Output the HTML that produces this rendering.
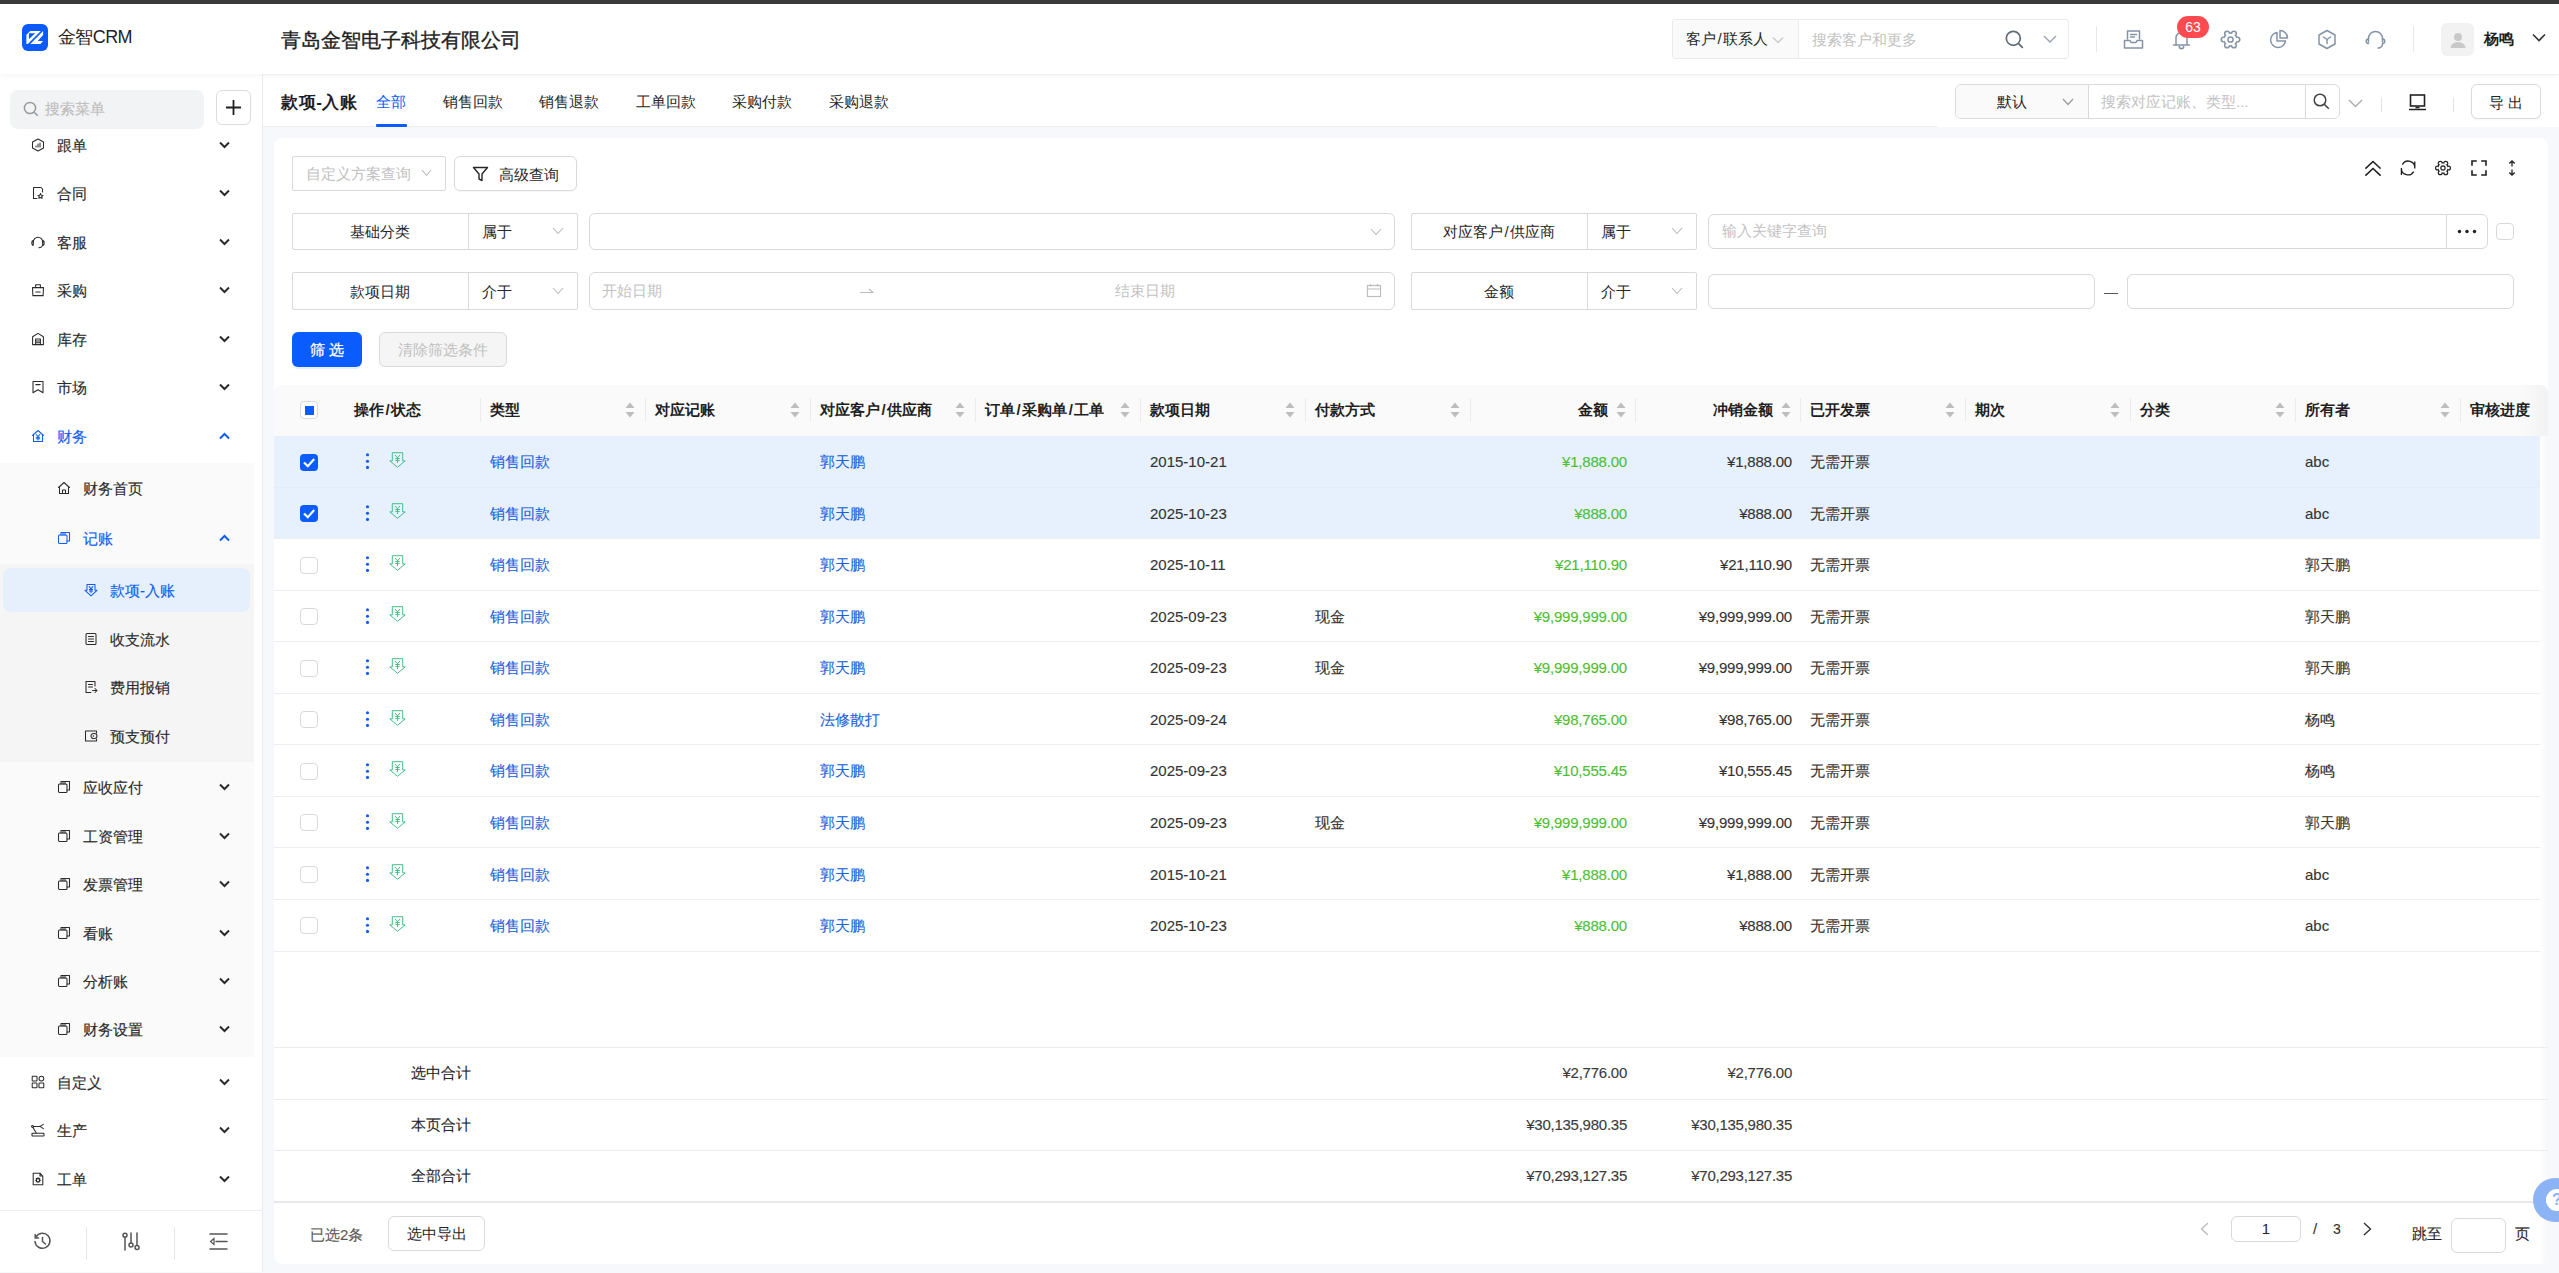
<!DOCTYPE html>
<html><head><meta charset="utf-8">
<style>
*{box-sizing:border-box;margin:0;padding:0}
html,body{width:2559px;height:1273px;overflow:hidden}
body{position:relative;background:#f6f8fb;font-family:"Liberation Sans",sans-serif;font-size:15px;color:#262626}
.a{position:absolute}
svg{display:block;overflow:visible}
#topbar{left:0;top:0;width:2559px;height:4px;background:#3a3a3a}
#header{left:0;top:4px;width:2559px;height:70px;background:#fff;box-shadow:0 2px 5px rgba(0,0,0,.045)}
#sidebar{left:0;top:74px;width:263px;height:1198px;background:#fff;border-right:1px solid #e9ebef}
.si{position:absolute;height:24px;line-height:24px;font-size:15px;color:#262626;white-space:nowrap;-webkit-text-stroke:0.15px currentColor}
.chev{position:absolute;left:219px;width:11px;height:8px}
#tabbar{left:263px;top:75px;width:2296px;height:52px;background:#fff}
#card{left:274px;top:138px;width:2274px;height:1126px;background:#fff;border-radius:8px}
.sl{padding:0 1.5px}

</style></head>
<body>
<div id="topbar" class="a"></div>
<div id="sidebar" class="a"></div>
<div id="tabbar" class="a"></div>
<div id="card" class="a"></div>
<div id="header" class="a"></div>
<div class="a" style="left:22px;top:24px;width:26px;height:27px;border-radius:6px;background:#0a5bff"></div>
<svg class="a" style="left:22px;top:24px" width="26" height="27" viewBox="0 0 26 27"><path d="M4.4 10.7 L8.3 6.9 H18.8 L5.8 19.9 H4.4 Z M6.9 9.2 V15.3 L13.2 9.2 Z" fill="#fff" fill-rule="evenodd"/><path d="M8.3 19.9 L21.1 7.1 V11.1 L15.7 17.1 H21.1 L18.5 19.9 Z" fill="#fff"/></svg>
<div class="a" style="left:58px;top:26px;font-size:18px;line-height:22px;color:#1f1f1f;letter-spacing:-0.6px">金智CRM</div>
<div class="a" style="left:281px;top:28px;font-size:19.6px;line-height:24px;color:#1f1f1f;-webkit-text-stroke:0.35px #1f1f1f">青岛金智电子科技有限公司</div>
<div class="a" style="left:1672px;top:19px;width:397px;height:40px;border:1px solid #ebebeb;border-radius:3px;background:#fff;overflow:hidden"><div class="a" style="left:0;top:0;width:126px;height:38px;background:#fafafa;border-right:1px solid #ebebeb"></div></div>
<div class="a" style="left:1686px;top:28px;line-height:22px;font-size:15px;color:#262626">客户<span class=sl>/</span>联系人</div>
<svg class="a" style="left:1772px;top:36px" width="12" height="8" viewBox="0 0 12 8"><path d="M1 1.5 L6 6.5 L11 1.5" stroke="#c8c8c8" stroke-width="1.3" fill="none"/></svg>
<div class="a" style="left:1812px;top:29px;line-height:22px;font-size:15px;color:#c2c2c2">搜索客户和更多</div>
<svg class="a" style="left:2005px;top:30px" width="19" height="19" viewBox="0 0 19 19"><circle cx="8.3" cy="8.3" r="7" stroke="#606b78" stroke-width="1.7" fill="none"/><path d="M13.3 13.3 L17.8 17.8" stroke="#606b78" stroke-width="1.8"/></svg>
<svg class="a" style="left:2043px;top:35px" width="14" height="8" viewBox="0 0 14 8"><path d="M1 1 L7 7 L13 1" stroke="#9aa3ad" stroke-width="1.4" fill="none"/></svg>
<div class="a" style="left:2096px;top:26px;width:1px;height:26px;background:#e8e8e8"></div>
<div class="a" style="left:2413px;top:26px;width:1px;height:26px;background:#e8e8e8"></div>
<svg class="a" style="left:2123px;top:29px" width="21" height="21" viewBox="0 0 21 21"><path d="M4.5 10 V2 H16.5 V10" stroke="#8494a6" stroke-width="1.5" fill="none" stroke-linecap="round" stroke-linejoin="round"/><path d="M7.5 5.5 H13.5 M7.5 8 H11.5" stroke="#8494a6" stroke-width="1.5" fill="none" stroke-linecap="round" stroke-linejoin="round"/><path d="M1.5 11.5 H7 L8 13.5 H13 L14 11.5 H19.5 V19 H1.5 Z" stroke="#8494a6" stroke-width="1.5" fill="none" stroke-linecap="round" stroke-linejoin="round"/></svg>
<svg class="a" style="left:2171px;top:29px" width="21" height="21" viewBox="0 0 21 21"><path d="M5 16 V9 A5.5 5.5 0 0 1 16 9 V16 M2.5 16 H18.5" stroke="#8494a6" stroke-width="1.5" fill="none" stroke-linecap="round" stroke-linejoin="round"/><path d="M8.3 17.6 A2.2 2.2 0 0 0 12.7 17.6" stroke="#8494a6" stroke-width="1.5" fill="none" stroke-linecap="round" stroke-linejoin="round"/></svg>
<div class="a" style="left:2177px;top:16px;width:32px;height:22px;border-radius:11px;background:#ff4b50;color:#fff;font-size:14px;line-height:23px;text-align:center">63</div>
<svg class="a" style="left:2220px;top:29px" width="21" height="21" viewBox="0 0 21 21"><circle cx="17.40" cy="10.50" r="3.1" fill="#8494a6"/><circle cx="13.95" cy="16.48" r="3.1" fill="#8494a6"/><circle cx="7.05" cy="16.48" r="3.1" fill="#8494a6"/><circle cx="3.60" cy="10.50" r="3.1" fill="#8494a6"/><circle cx="7.05" cy="4.52" r="3.1" fill="#8494a6"/><circle cx="13.95" cy="4.52" r="3.1" fill="#8494a6"/><circle cx="10.5" cy="10.5" r="7.3" fill="#8494a6"/><circle cx="17.20" cy="10.50" r="1.65" fill="#fff"/><circle cx="13.85" cy="16.30" r="1.65" fill="#fff"/><circle cx="7.15" cy="16.30" r="1.65" fill="#fff"/><circle cx="3.80" cy="10.50" r="1.65" fill="#fff"/><circle cx="7.15" cy="4.70" r="1.65" fill="#fff"/><circle cx="13.85" cy="4.70" r="1.65" fill="#fff"/><circle cx="10.5" cy="10.5" r="5.8" fill="#fff"/><circle cx="10.5" cy="10.5" r="2.6" stroke="#8494a6" stroke-width="1.5" fill="none"/></svg>
<svg class="a" style="left:2268px;top:29px" width="21" height="21" viewBox="0 0 21 21"><path d="M9 3.5 A7.5 7.5 0 1 0 17.5 12 H9 Z" stroke="#8494a6" stroke-width="1.5" fill="none" stroke-linecap="round" stroke-linejoin="round"/><path d="M12 1.5 A7.5 7.5 0 0 1 19.5 9 H12 Z" stroke="#8494a6" stroke-width="1.5" fill="none" stroke-linecap="round" stroke-linejoin="round"/></svg>
<svg class="a" style="left:2317px;top:29px" width="20" height="21" viewBox="0 0 20 21"><path d="M10 1.5 L18 6 V15 L10 19.5 L2 15 V6 Z" stroke="#8494a6" stroke-width="1.5" fill="none" stroke-linecap="round" stroke-linejoin="round"/><path d="M6.5 8 L10 10.5 L13.5 8 M10 10.5 V14.5" stroke="#8494a6" stroke-width="1.5" fill="none" stroke-linecap="round" stroke-linejoin="round"/></svg>
<svg class="a" style="left:2365px;top:29px" width="21" height="21" viewBox="0 0 21 21"><path d="M3.5 13 V9.5 A7 7 0 0 1 17.5 9.5 V13" stroke="#8494a6" stroke-width="1.5" fill="none" stroke-linecap="round" stroke-linejoin="round"/><path d="M3.5 10 A2 2 0 0 0 3.5 14.5" stroke="#8494a6" stroke-width="1.5" fill="none" stroke-linecap="round" stroke-linejoin="round"/><path d="M17.5 10 A2 2 0 0 1 17.5 14.5 V15 A4 4 0 0 1 13 19" stroke="#8494a6" stroke-width="1.5" fill="none" stroke-linecap="round" stroke-linejoin="round"/></svg>
<div class="a" style="left:2441px;top:23px;width:33px;height:33px;border-radius:6px;background:#f2f2f2"></div>
<svg class="a" style="left:2448px;top:30px" width="20" height="20" viewBox="0 0 20 20"><circle cx="10" cy="7" r="4" fill="#c9c9c9"/><path d="M2.5 18 Q3 12.5 10 12 Q17 12.5 17.5 18 Z" fill="#c9c9c9"/></svg>
<div class="a" style="left:2484px;top:28px;line-height:22px;font-size:15px;font-weight:bold;color:#1f1f1f">杨鸣</div>
<svg class="a" style="left:2532px;top:33px" width="14" height="9" viewBox="0 0 14 9"><path d="M1 1.5 L7 7.5 L13 1.5" stroke="#333" stroke-width="1.6" fill="none"/></svg>
<div class="a" style="left:0;top:463px;width:254px;height:594px;background:#fafafa"></div>
<div class="a" style="left:0;top:564px;width:254px;height:198px;background:#f5f5f5"></div>
<div class="a" style="left:3px;top:568px;width:247px;height:44px;border-radius:8px;background:#e6f0fc"></div>
<svg class="a" style="left:31px;top:138px" width="14" height="14" viewBox="0 0 14 14"><path d="M7 1 L12.5 4 V10 L7 13 L1.5 10 V4 Z" stroke="#2b2b2b" stroke-width="1.05" fill="none" stroke-linecap="round" stroke-linejoin="round"/><path d="M5 9V8 M7 9V6 M9 9V5" stroke="#2b2b2b" stroke-width="1.05" fill="none" stroke-linecap="round" stroke-linejoin="round"/></svg>
<div class="si" style="left:57px;top:134px;color:#2b2b2b">跟单</div>
<svg class="chev" style="top:141px" viewBox="0 0 11 8"><path d="M1 1.5 L5.5 6 L10 1.5" stroke="#2b2b2b" stroke-width="2" fill="none"/></svg>
<svg class="a" style="left:31px;top:186px" width="14" height="14" viewBox="0 0 14 14"><path d="M10 1.5 H2.5 V12.5 H6 M10 1.5 L11.5 3 V6" stroke="#2b2b2b" stroke-width="1.05" fill="none" stroke-linecap="round" stroke-linejoin="round"/><path d="M9.5 7.5 L10.3 9.2 L12 9.4 L10.8 10.6 L11.1 12.3 L9.5 11.5 L7.9 12.3 L8.2 10.6 L7 9.4 L8.7 9.2Z" stroke="#2b2b2b" stroke-width="1.05" fill="none" stroke-linecap="round" stroke-linejoin="round"/></svg>
<div class="si" style="left:57px;top:182px;color:#2b2b2b">合同</div>
<svg class="chev" style="top:189px" viewBox="0 0 11 8"><path d="M1 1.5 L5.5 6 L10 1.5" stroke="#2b2b2b" stroke-width="2" fill="none"/></svg>
<svg class="a" style="left:31px;top:235px" width="14" height="14" viewBox="0 0 14 14"><path d="M2.3 7.2 A4.7 5 0 0 1 11.7 7.2" stroke="#2b2b2b" stroke-width="1.05" fill="none" stroke-linecap="round" stroke-linejoin="round"/><path d="M2.3 5.6 A1.5 2.3 0 0 0 2.3 10.2 Z" stroke="#2b2b2b" stroke-width="1.05" fill="none" stroke-linecap="round" stroke-linejoin="round"/><path d="M11.7 5.6 A1.5 2.3 0 0 1 11.7 10.2 Z" stroke="#2b2b2b" stroke-width="1.05" fill="none" stroke-linecap="round" stroke-linejoin="round"/><path d="M11.7 10 Q11.2 12.5 7.8 12.8" stroke="#2b2b2b" stroke-width="1.05" fill="none" stroke-linecap="round" stroke-linejoin="round"/></svg>
<div class="si" style="left:57px;top:231px;color:#2b2b2b">客服</div>
<svg class="chev" style="top:238px" viewBox="0 0 11 8"><path d="M1 1.5 L5.5 6 L10 1.5" stroke="#2b2b2b" stroke-width="2" fill="none"/></svg>
<svg class="a" style="left:31px;top:283px" width="14" height="14" viewBox="0 0 14 14"><path d="M1.5 4.6 H12.5 L12.1 12.6 H1.9 Z" stroke="#2b2b2b" stroke-width="1.05" fill="none" stroke-linecap="round" stroke-linejoin="round"/><path d="M4.6 4.6 V1.8 H9.4 V4.6 M4.8 9 H9.2" stroke="#2b2b2b" stroke-width="1.05" fill="none" stroke-linecap="round" stroke-linejoin="round"/></svg>
<div class="si" style="left:57px;top:279px;color:#2b2b2b">采购</div>
<svg class="chev" style="top:286px" viewBox="0 0 11 8"><path d="M1 1.5 L5.5 6 L10 1.5" stroke="#2b2b2b" stroke-width="2" fill="none"/></svg>
<svg class="a" style="left:31px;top:332px" width="14" height="14" viewBox="0 0 14 14"><path d="M1.6 4.8 L7 1.4 L12.4 4.8 V12.6 H1.6 Z" stroke="#2b2b2b" stroke-width="1.05" fill="none" stroke-linecap="round" stroke-linejoin="round"/><path d="M4.6 12.6 V7 H9.4 V12.6 M4.6 8.9 H9.4 M4.6 10.8 H9.4" stroke="#2b2b2b" stroke-width="1.05" fill="none" stroke-linecap="round" stroke-linejoin="round"/></svg>
<div class="si" style="left:57px;top:328px;color:#2b2b2b">库存</div>
<svg class="chev" style="top:335px" viewBox="0 0 11 8"><path d="M1 1.5 L5.5 6 L10 1.5" stroke="#2b2b2b" stroke-width="2" fill="none"/></svg>
<svg class="a" style="left:31px;top:380px" width="14" height="14" viewBox="0 0 14 14"><path d="M2 1.4 H12 V12.8 L7 9.8 L2 12.8 Z" stroke="#2b2b2b" stroke-width="1.05" fill="none" stroke-linecap="round" stroke-linejoin="round"/><path d="M4.8 4.6 H9.2" stroke="#2b2b2b" stroke-width="1.05" fill="none" stroke-linecap="round" stroke-linejoin="round"/></svg>
<div class="si" style="left:57px;top:376px;color:#2b2b2b">市场</div>
<svg class="chev" style="top:383px" viewBox="0 0 11 8"><path d="M1 1.5 L5.5 6 L10 1.5" stroke="#2b2b2b" stroke-width="2" fill="none"/></svg>
<svg class="a" style="left:31px;top:429px" width="14" height="14" viewBox="0 0 14 14"><path d="M1.5 6.5 L7 1.5 L12.5 6.5 M2.5 5.5 V12.5 H11.5 V5.5" stroke="#0e5ef6" stroke-width="1.05" fill="none" stroke-linecap="round" stroke-linejoin="round"/><path d="M5.2 5.5 L7 7.5 L8.8 5.5 M7 7.5 V11 M5.3 8.3 H8.7 M5.3 9.8 H8.7" stroke="#0e5ef6" stroke-width="1.05" fill="none" stroke-linecap="round" stroke-linejoin="round"/></svg>
<div class="si" style="left:57px;top:425px;color:#0e5ef6">财务</div>
<svg class="chev" style="top:432px" viewBox="0 0 11 8"><path d="M1 6.5 L5.5 2 L10 6.5" stroke="#0e5ef6" stroke-width="2" fill="none"/></svg>
<svg class="a" style="left:57px;top:481px" width="14" height="14" viewBox="0 0 14 14"><path d="M1.5 6.5 L7 1.5 L12.5 6.5 M2.5 5.5 V12.5 H11.5 V5.5 M5.5 12.5 V9 H8.5 V12.5" stroke="#2b2b2b" stroke-width="1.05" fill="none" stroke-linecap="round" stroke-linejoin="round"/></svg>
<div class="si" style="left:83px;top:477px;color:#2b2b2b">财务首页</div>
<svg class="a" style="left:57px;top:531px" width="14" height="14" viewBox="0 0 14 14"><rect x="1.5" y="4" width="8.5" height="8.5" rx="1" stroke="#0e5ef6" stroke-width="1.05" fill="none" stroke-linecap="round" stroke-linejoin="round"/><path d="M4 4 V1.5 H12.5 V10 H10 M6 1.5 V4 M8 1.5 V4" stroke="#0e5ef6" stroke-width="1.05" fill="none" stroke-linecap="round" stroke-linejoin="round"/></svg>
<div class="si" style="left:83px;top:527px;color:#0e5ef6">记账</div>
<svg class="chev" style="top:534px" viewBox="0 0 11 8"><path d="M1 6.5 L5.5 2 L10 6.5" stroke="#0e5ef6" stroke-width="2" fill="none"/></svg>
<svg class="a" style="left:84px;top:583px" width="14" height="14" viewBox="0 0 14 14"><path d="M3 1.5 H11 V7.3 H13 L7 12.8 L1 7.3 H3 Z" stroke="#0e5ef6" stroke-width="1.05" fill="none" stroke-linecap="round" stroke-linejoin="round"/><path d="M5.2 3.6 L7 5.8 L8.8 3.6 M7 5.8 V9.6 M5.4 6.5 H8.6 M5.4 8 H8.6" stroke="#0e5ef6" stroke-width="1.05" fill="none" stroke-linecap="round" stroke-linejoin="round"/></svg>
<div class="si" style="left:110px;top:579px;color:#0e5ef6">款项-入账</div>
<svg class="a" style="left:84px;top:632px" width="14" height="14" viewBox="0 0 14 14"><rect x="2" y="1.5" width="10" height="11" rx="1" stroke="#2b2b2b" stroke-width="1.05" fill="none" stroke-linecap="round" stroke-linejoin="round"/><path d="M4.5 4.5 H9.5 M4.5 7 H9.5 M4.5 9.5 H9.5" stroke="#2b2b2b" stroke-width="1.05" fill="none" stroke-linecap="round" stroke-linejoin="round"/></svg>
<div class="si" style="left:110px;top:628px;color:#2b2b2b">收支流水</div>
<svg class="a" style="left:84px;top:680px" width="14" height="14" viewBox="0 0 14 14"><path d="M11 6 V1.5 H2 V12.5 H7 M4.5 4.5H8.5 M4.5 7H8.5 M8.5 10.5 H13 M11 8.5 L13 10.5 L11 12.5" stroke="#2b2b2b" stroke-width="1.05" fill="none" stroke-linecap="round" stroke-linejoin="round"/></svg>
<div class="si" style="left:110px;top:676px;color:#2b2b2b">费用报销</div>
<svg class="a" style="left:84px;top:729px" width="14" height="14" viewBox="0 0 14 14"><path d="M12.5 4 V2 H1.5 V12 H12.5 V10" stroke="#2b2b2b" stroke-width="1.05" fill="none" stroke-linecap="round" stroke-linejoin="round"/><rect x="7" y="4.5" width="6" height="5" rx="2.5" stroke="#2b2b2b" stroke-width="1.05" fill="none" stroke-linecap="round" stroke-linejoin="round"/><circle cx="9.5" cy="7" r="0.8" fill="#2b2b2b"/></svg>
<div class="si" style="left:110px;top:725px;color:#2b2b2b">预支预付</div>
<svg class="a" style="left:57px;top:780px" width="14" height="14" viewBox="0 0 14 14"><rect x="1.5" y="4" width="8.5" height="8.5" rx="1" stroke="#2b2b2b" stroke-width="1.05" fill="none" stroke-linecap="round" stroke-linejoin="round"/><path d="M4 4 V1.5 H12.5 V10 H10 M6 1.5 V4 M8 1.5 V4" stroke="#2b2b2b" stroke-width="1.05" fill="none" stroke-linecap="round" stroke-linejoin="round"/></svg>
<div class="si" style="left:83px;top:776px;color:#2b2b2b">应收应付</div>
<svg class="chev" style="top:783px" viewBox="0 0 11 8"><path d="M1 1.5 L5.5 6 L10 1.5" stroke="#2b2b2b" stroke-width="2" fill="none"/></svg>
<svg class="a" style="left:57px;top:829px" width="14" height="14" viewBox="0 0 14 14"><rect x="1.5" y="4" width="8.5" height="8.5" rx="1" stroke="#2b2b2b" stroke-width="1.05" fill="none" stroke-linecap="round" stroke-linejoin="round"/><path d="M4 4 V1.5 H12.5 V10 H10 M6 1.5 V4 M8 1.5 V4" stroke="#2b2b2b" stroke-width="1.05" fill="none" stroke-linecap="round" stroke-linejoin="round"/></svg>
<div class="si" style="left:83px;top:825px;color:#2b2b2b">工资管理</div>
<svg class="chev" style="top:832px" viewBox="0 0 11 8"><path d="M1 1.5 L5.5 6 L10 1.5" stroke="#2b2b2b" stroke-width="2" fill="none"/></svg>
<svg class="a" style="left:57px;top:877px" width="14" height="14" viewBox="0 0 14 14"><rect x="1.5" y="4" width="8.5" height="8.5" rx="1" stroke="#2b2b2b" stroke-width="1.05" fill="none" stroke-linecap="round" stroke-linejoin="round"/><path d="M4 4 V1.5 H12.5 V10 H10 M6 1.5 V4 M8 1.5 V4" stroke="#2b2b2b" stroke-width="1.05" fill="none" stroke-linecap="round" stroke-linejoin="round"/></svg>
<div class="si" style="left:83px;top:873px;color:#2b2b2b">发票管理</div>
<svg class="chev" style="top:880px" viewBox="0 0 11 8"><path d="M1 1.5 L5.5 6 L10 1.5" stroke="#2b2b2b" stroke-width="2" fill="none"/></svg>
<svg class="a" style="left:57px;top:926px" width="14" height="14" viewBox="0 0 14 14"><rect x="1.5" y="4" width="8.5" height="8.5" rx="1" stroke="#2b2b2b" stroke-width="1.05" fill="none" stroke-linecap="round" stroke-linejoin="round"/><path d="M4 4 V1.5 H12.5 V10 H10 M6 1.5 V4 M8 1.5 V4" stroke="#2b2b2b" stroke-width="1.05" fill="none" stroke-linecap="round" stroke-linejoin="round"/></svg>
<div class="si" style="left:83px;top:922px;color:#2b2b2b">看账</div>
<svg class="chev" style="top:929px" viewBox="0 0 11 8"><path d="M1 1.5 L5.5 6 L10 1.5" stroke="#2b2b2b" stroke-width="2" fill="none"/></svg>
<svg class="a" style="left:57px;top:974px" width="14" height="14" viewBox="0 0 14 14"><rect x="1.5" y="4" width="8.5" height="8.5" rx="1" stroke="#2b2b2b" stroke-width="1.05" fill="none" stroke-linecap="round" stroke-linejoin="round"/><path d="M4 4 V1.5 H12.5 V10 H10 M6 1.5 V4 M8 1.5 V4" stroke="#2b2b2b" stroke-width="1.05" fill="none" stroke-linecap="round" stroke-linejoin="round"/></svg>
<div class="si" style="left:83px;top:970px;color:#2b2b2b">分析账</div>
<svg class="chev" style="top:977px" viewBox="0 0 11 8"><path d="M1 1.5 L5.5 6 L10 1.5" stroke="#2b2b2b" stroke-width="2" fill="none"/></svg>
<svg class="a" style="left:57px;top:1022px" width="14" height="14" viewBox="0 0 14 14"><rect x="1.5" y="4" width="8.5" height="8.5" rx="1" stroke="#2b2b2b" stroke-width="1.05" fill="none" stroke-linecap="round" stroke-linejoin="round"/><path d="M4 4 V1.5 H12.5 V10 H10 M6 1.5 V4 M8 1.5 V4" stroke="#2b2b2b" stroke-width="1.05" fill="none" stroke-linecap="round" stroke-linejoin="round"/></svg>
<div class="si" style="left:83px;top:1018px;color:#2b2b2b">财务设置</div>
<svg class="chev" style="top:1025px" viewBox="0 0 11 8"><path d="M1 1.5 L5.5 6 L10 1.5" stroke="#2b2b2b" stroke-width="2" fill="none"/></svg>
<svg class="a" style="left:31px;top:1075px" width="14" height="14" viewBox="0 0 14 14"><rect x="1.2" y="1.2" width="4.8" height="4.8" rx="0.6" stroke="#2b2b2b" stroke-width="1.05" fill="none" stroke-linecap="round" stroke-linejoin="round"/><circle cx="10.4" cy="3.6" r="2.4" stroke="#2b2b2b" stroke-width="1.05" fill="none" stroke-linecap="round" stroke-linejoin="round"/><rect x="1.2" y="8" width="4.8" height="4.8" rx="0.6" stroke="#2b2b2b" stroke-width="1.05" fill="none" stroke-linecap="round" stroke-linejoin="round"/><rect x="8" y="8" width="4.8" height="4.8" rx="0.6" stroke="#2b2b2b" stroke-width="1.05" fill="none" stroke-linecap="round" stroke-linejoin="round"/></svg>
<div class="si" style="left:57px;top:1071px;color:#2b2b2b">自定义</div>
<svg class="chev" style="top:1078px" viewBox="0 0 11 8"><path d="M1 1.5 L5.5 6 L10 1.5" stroke="#2b2b2b" stroke-width="2" fill="none"/></svg>
<svg class="a" style="left:31px;top:1123px" width="14" height="14" viewBox="0 0 14 14"><circle cx="1.6" cy="3.4" r="1" stroke="#2b2b2b" stroke-width="1.05" fill="none" stroke-linecap="round" stroke-linejoin="round"/><path d="M2.6 3.4 H9 M9 3.4 L12.4 1.4 M9 3.4 L12.4 5.6 M2 4.4 L5.2 10" stroke="#2b2b2b" stroke-width="1.05" fill="none" stroke-linecap="round" stroke-linejoin="round"/><rect x="1" y="10.2" width="12" height="2.8" rx="0.4" stroke="#2b2b2b" stroke-width="1.05" fill="none" stroke-linecap="round" stroke-linejoin="round"/></svg>
<div class="si" style="left:57px;top:1119px;color:#2b2b2b">生产</div>
<svg class="chev" style="top:1126px" viewBox="0 0 11 8"><path d="M1 1.5 L5.5 6 L10 1.5" stroke="#2b2b2b" stroke-width="2" fill="none"/></svg>
<svg class="a" style="left:31px;top:1172px" width="14" height="14" viewBox="0 0 14 14"><path d="M9 1.2 H2.2 V12.8 H11.8 V4 Z M9 1.2 V4 H11.8" stroke="#2b2b2b" stroke-width="1.05" fill="none" stroke-linecap="round" stroke-linejoin="round"/><circle cx="7" cy="8.2" r="1.6" stroke="#2b2b2b" stroke-width="1.05" fill="none" stroke-linecap="round" stroke-linejoin="round"/><path d="M7 5.6V6.4M7 10V10.8M4.4 8.2H5.2M8.8 8.2H9.6M5.2 6.4L5.7 6.9M8.3 9.5L8.8 10M5.2 10L5.7 9.5M8.3 6.9L8.8 6.4" stroke="#2b2b2b" stroke-width="1.05" fill="none" stroke-linecap="round" stroke-linejoin="round"/></svg>
<div class="si" style="left:57px;top:1168px;color:#2b2b2b">工单</div>
<svg class="chev" style="top:1175px" viewBox="0 0 11 8"><path d="M1 1.5 L5.5 6 L10 1.5" stroke="#2b2b2b" stroke-width="2" fill="none"/></svg>
<div class="a" style="left:10px;top:90px;width:194px;height:39px;border-radius:8px;background:#f2f3f5"></div>
<svg class="a" style="left:23px;top:101px" width="16" height="16" viewBox="0 0 16 16"><circle cx="7" cy="7" r="5.6" stroke="#9a9a9a" stroke-width="1.5" fill="none"/><path d="M11.2 11.2 L14.8 14.8" stroke="#9a9a9a" stroke-width="1.6"/></svg>
<div class="si" style="left:45px;top:97px;color:#bdbdbd">搜索菜单</div>
<div class="a" style="left:216px;top:90px;width:35px;height:35px;border:1px solid #dcdcdc;border-radius:6px;background:#fff"></div>
<svg class="a" style="left:225px;top:99px" width="17" height="17" viewBox="0 0 17 17"><path d="M8.5 1 V16 M1 8.5 H16" stroke="#1f1f1f" stroke-width="1.8"/></svg>
<div class="a" style="left:0;top:1210px;width:262px;height:1px;background:#eceef1"></div>
<div class="a" style="left:86px;top:1227px;width:1px;height:33px;background:#e6e6e6"></div>
<div class="a" style="left:174px;top:1227px;width:1px;height:33px;background:#e6e6e6"></div>
<svg class="a" style="left:33px;top:1232px" width="19" height="19" viewBox="0 0 19 19"><path d="M3 5 A7.5 7.5 0 1 1 2 9.5" stroke="#555" stroke-width="1.5" fill="none" stroke-linecap="round"/><path d="M2.2 2.5 V6 H5.5" stroke="#555" stroke-width="1.5" fill="none" stroke-linecap="round"/><path d="M9.5 5.5 V9.5 L12.5 12" stroke="#555" stroke-width="1.5" fill="none" stroke-linecap="round"/></svg>
<svg class="a" style="left:122px;top:1232px" width="18" height="19" viewBox="0 0 18 19"><path d="M3 5 V18 M9 1 V11 M15 1 V13" stroke="#555" stroke-width="1.5" fill="none" stroke-linecap="round"/><circle cx="3" cy="3.2" r="2" stroke="#555" stroke-width="1.5" fill="none" stroke-linecap="round"/><circle cx="9" cy="13" r="2" stroke="#555" stroke-width="1.5" fill="none" stroke-linecap="round"/><circle cx="15" cy="15.5" r="2" stroke="#555" stroke-width="1.5" fill="none" stroke-linecap="round"/></svg>
<svg class="a" style="left:209px;top:1232px" width="19" height="19" viewBox="0 0 19 19"><path d="M1 2 H18 M7 9.5 H18 M1 17 H18" stroke="#555" stroke-width="1.5" fill="none" stroke-linecap="round"/><path d="M5 6.5 L1.5 9.5 L5 12.5 Z" stroke="#555" stroke-width="1.2" fill="none"/></svg>
<div class="a" style="left:281px;top:92px;line-height:22px;font-size:17px;font-weight:bold;color:#1f1f1f;letter-spacing:0.6px">款项-入账</div>
<div class="a" style="left:376px;top:91px;line-height:22px;font-size:15px;color:#0a5cff">全部</div>
<div class="a" style="left:443px;top:91px;line-height:22px;font-size:15px;color:#262626">销售回款</div>
<div class="a" style="left:539px;top:91px;line-height:22px;font-size:15px;color:#262626">销售退款</div>
<div class="a" style="left:636px;top:91px;line-height:22px;font-size:15px;color:#262626">工单回款</div>
<div class="a" style="left:732px;top:91px;line-height:22px;font-size:15px;color:#262626">采购付款</div>
<div class="a" style="left:829px;top:91px;line-height:22px;font-size:15px;color:#262626">采购退款</div>
<div class="a" style="left:263px;top:126px;width:1674px;height:1px;background:#eeeeee"></div>
<div class="a" style="left:376px;top:124px;width:31px;height:3px;background:#0a5cff;border-radius:1px"></div>
<div class="a" style="left:1955px;top:84px;width:385px;height:35px;border:1px solid #dadada;border-radius:6px;background:#fff;overflow:hidden"><div class="a" style="left:0;top:0;width:133px;height:33px;background:#fafafa;border-right:1px solid #dadada"></div><div class="a" style="left:349px;top:0;width:1px;height:33px;background:#dadada"></div></div>
<div class="a" style="left:1997px;top:91px;line-height:22px;font-size:15px;color:#262626">默认</div>
<svg class="a" style="left:2062px;top:98px" width="12" height="8" viewBox="0 0 12 8"><path d="M1 1 L6 6.5 L11 1" stroke="#999" stroke-width="1.2" fill="none"/></svg>
<div class="a" style="left:2101px;top:91px;line-height:22px;font-size:15px;color:#c2c2c2">搜索对应记账、类型...</div>
<svg class="a" style="left:2313px;top:93px" width="17" height="17" viewBox="0 0 17 17"><circle cx="7" cy="7" r="5.8" stroke="#444" stroke-width="1.5" fill="none"/><path d="M11.2 11.2 L15.8 15.8" stroke="#444" stroke-width="1.6"/></svg>
<svg class="a" style="left:2348px;top:99px" width="15" height="9" viewBox="0 0 15 9"><path d="M1 1 L7.5 7.5 L14 1" stroke="#aaa" stroke-width="1.4" fill="none"/></svg>
<div class="a" style="left:2381px;top:97px;width:1px;height:15px;background:#e3e3e3"></div>
<div class="a" style="left:2453px;top:97px;width:1px;height:15px;background:#e3e3e3"></div>
<svg class="a" style="left:2408px;top:94px" width="19" height="17" viewBox="0 0 19 17"><rect x="2.5" y="1" width="14" height="11" stroke="#222" stroke-width="1.6" fill="none"/><path d="M1 15.5 H18 M7.5 13.5 H11.5" stroke="#222" stroke-width="1.6"/></svg>
<div class="a" style="left:2471px;top:84px;width:70px;height:35px;border:1px solid #dadada;border-radius:6px;background:#fff;box-shadow:0 1px 2px rgba(0,0,0,.03)"></div>
<div class="a" style="left:2489px;top:92px;line-height:22px;font-size:15px;color:#262626;letter-spacing:4px">导出</div>
<div class="a" style="left:292px;top:156px;width:154px;height:35px;border:1px solid #d9d9d9;border-radius:2px;background:#fff"></div>
<div class="a" style="left:306px;top:163px;line-height:22px;font-size:15px;color:#bfbfbf">自定义方案查询</div>
<svg class="a" style="left:421px;top:169px" width="11" height="8" viewBox="0 0 11 8"><path d="M1 1 L5.5 6.5 L10 1" stroke="#bbb" stroke-width="1.1" fill="none"/></svg>
<div class="a" style="left:454px;top:156px;width:123px;height:35px;border:1px solid #d9d9d9;border-radius:6px;background:#fff;box-shadow:0 1px 2px rgba(0,0,0,.04)"></div>
<svg class="a" style="left:472px;top:166px" width="17" height="16" viewBox="0 0 17 16"><path d="M1.5 1.5 H15.5 L10 8 V14.5 L7 13 V8 Z" stroke="#262626" stroke-width="1.4" fill="none" stroke-linejoin="round"/></svg>
<div class="a" style="left:499px;top:163.5px;line-height:22px;font-size:15px;color:#262626">高级查询</div>
<svg class="a" style="left:2364px;top:159px" width="18" height="18" viewBox="0 0 18 18"><path d="M2 9 L9 2.5 L16 9 M2 16 L9 9.5 L16 16" stroke="#1f1f1f" stroke-width="1.6" fill="none" stroke-linecap="square"/></svg>
<svg class="a" style="left:2399px;top:159px" width="18" height="18" viewBox="0 0 18 18"><path d="M3.4 5.6 A6.6 6.6 0 0 1 15.8 9.2 M15.8 9.6 V2.6 M14.7 12.6 A6.6 6.6 0 0 1 2.4 9.4 M2.4 9 V16" stroke="#1f1f1f" stroke-width="1.3" fill="none"/></svg>
<svg class="a" style="left:2434px;top:159px" width="18" height="18" viewBox="0 0 18 18"><circle cx="14.50" cy="9.00" r="2.55" fill="#1f1f1f"/><circle cx="11.75" cy="13.76" r="2.55" fill="#1f1f1f"/><circle cx="6.25" cy="13.76" r="2.55" fill="#1f1f1f"/><circle cx="3.50" cy="9.00" r="2.55" fill="#1f1f1f"/><circle cx="6.25" cy="4.24" r="2.55" fill="#1f1f1f"/><circle cx="11.75" cy="4.24" r="2.55" fill="#1f1f1f"/><circle cx="9" cy="9" r="5.7" fill="#1f1f1f"/><circle cx="14.50" cy="9.00" r="1.35" fill="#fff"/><circle cx="11.75" cy="13.76" r="1.35" fill="#fff"/><circle cx="6.25" cy="13.76" r="1.35" fill="#fff"/><circle cx="3.50" cy="9.00" r="1.35" fill="#fff"/><circle cx="6.25" cy="4.24" r="1.35" fill="#fff"/><circle cx="11.75" cy="4.24" r="1.35" fill="#fff"/><circle cx="9" cy="9" r="4.5" fill="#fff"/><circle cx="9" cy="9" r="2.1" stroke="#1f1f1f" stroke-width="1.2" fill="none"/></svg>
<svg class="a" style="left:2470px;top:159px" width="18" height="18" viewBox="0 0 18 18"><path d="M2 6 V2 H6 M12 2 H16 V6 M16 12 V16 H12 M6 16 H2 V12" stroke="#1f1f1f" stroke-width="1.6" fill="none" stroke-linecap="square"/></svg>
<svg class="a" style="left:2505px;top:159px" width="14" height="18" viewBox="0 0 14 18"><path d="M7 2 V7.6 M4.3 4.5 L7 1.8 L9.7 4.5 M7 10.4 V16 M4.3 13.5 L7 16.2 L9.7 13.5" stroke="#1f1f1f" stroke-width="1.3" fill="none"/></svg>
<div class="a" style="left:292px;top:213px;width:286px;height:37px;border:1px solid #d9d9d9;border-radius:2px;background:#fff"><div class="a" style="left:175px;top:0;width:1px;height:35px;background:#d9d9d9"></div></div>
<div class="a" style="left:292px;top:221.3px;width:176px;line-height:22px;font-size:15px;color:#262626;text-align:center">基础分类</div>
<div class="a" style="left:482px;top:221.3px;line-height:22px;font-size:15px;color:#262626">属于</div>
<svg class="a" style="left:552px;top:227px" width="12" height="8" viewBox="0 0 12 8"><path d="M1 1 L6 6.5 L11 1" stroke="#bbb" stroke-width="1.1" fill="none"/></svg>
<div class="a" style="left:1411px;top:213px;width:286px;height:37px;border:1px solid #d9d9d9;border-radius:2px;background:#fff"><div class="a" style="left:175px;top:0;width:1px;height:35px;background:#d9d9d9"></div></div>
<div class="a" style="left:1411px;top:221.3px;width:176px;line-height:22px;font-size:15px;color:#262626;text-align:center">对应客户<span class=sl>/</span>供应商</div>
<div class="a" style="left:1601px;top:221.3px;line-height:22px;font-size:15px;color:#262626">属于</div>
<svg class="a" style="left:1671px;top:227px" width="12" height="8" viewBox="0 0 12 8"><path d="M1 1 L6 6.5 L11 1" stroke="#bbb" stroke-width="1.1" fill="none"/></svg>
<div class="a" style="left:292px;top:272px;width:286px;height:38px;border:1px solid #d9d9d9;border-radius:2px;background:#fff"><div class="a" style="left:175px;top:0;width:1px;height:36px;background:#d9d9d9"></div></div>
<div class="a" style="left:292px;top:280.8px;width:176px;line-height:22px;font-size:15px;color:#262626;text-align:center">款项日期</div>
<div class="a" style="left:482px;top:280.8px;line-height:22px;font-size:15px;color:#262626">介于</div>
<svg class="a" style="left:552px;top:287px" width="12" height="8" viewBox="0 0 12 8"><path d="M1 1 L6 6.5 L11 1" stroke="#bbb" stroke-width="1.1" fill="none"/></svg>
<div class="a" style="left:1411px;top:272px;width:286px;height:38px;border:1px solid #d9d9d9;border-radius:2px;background:#fff"><div class="a" style="left:175px;top:0;width:1px;height:36px;background:#d9d9d9"></div></div>
<div class="a" style="left:1411px;top:280.8px;width:176px;line-height:22px;font-size:15px;color:#262626;text-align:center">金额</div>
<div class="a" style="left:1601px;top:280.8px;line-height:22px;font-size:15px;color:#262626">介于</div>
<svg class="a" style="left:1671px;top:287px" width="12" height="8" viewBox="0 0 12 8"><path d="M1 1 L6 6.5 L11 1" stroke="#bbb" stroke-width="1.1" fill="none"/></svg>
<div class="a" style="left:589px;top:213px;width:806px;height:37px;border:1px solid #d9d9d9;border-radius:6px;background:#fff"></div>
<svg class="a" style="left:1370px;top:228px" width="12" height="8" viewBox="0 0 12 8"><path d="M1 1 L6 6.5 L11 1" stroke="#bbb" stroke-width="1.1" fill="none"/></svg>
<div class="a" style="left:1708px;top:214px;width:780px;height:35px;border:1px solid #d9d9d9;border-radius:6px;background:#fff"><div class="a" style="left:737px;top:0;width:1px;height:33px;background:#d9d9d9"></div></div>
<div class="a" style="left:1722px;top:220px;line-height:22px;font-size:15px;color:#c2c2c2">输入关键字查询</div>
<svg class="a" style="left:2457px;top:229px" width="20" height="5" viewBox="0 0 20 5"><circle cx="2.5" cy="2.5" r="1.7" fill="#1f1f1f"/><circle cx="10" cy="2.5" r="1.7" fill="#1f1f1f"/><circle cx="17.5" cy="2.5" r="1.7" fill="#1f1f1f"/></svg>
<div class="a" style="left:2496px;top:223px;width:18px;height:17px;border:1px solid #d9d9d9;border-radius:4px;background:#fff"></div>
<div class="a" style="left:589px;top:272px;width:806px;height:38px;border:1px solid #d9d9d9;border-radius:6px;background:#fff"></div>
<div class="a" style="left:602px;top:280px;line-height:22px;font-size:15px;color:#c2c2c2">开始日期</div>
<svg class="a" style="left:859px;top:286px" width="15" height="8" viewBox="0 0 15 8"><path d="M1 6.5 H14 L10 3" stroke="#bdbdbd" stroke-width="1.1" fill="none"/></svg>
<div class="a" style="left:1115px;top:280px;line-height:22px;font-size:15px;color:#c2c2c2">结束日期</div>
<svg class="a" style="left:1366px;top:283px" width="16" height="15" viewBox="0 0 16 15"><rect x="1.5" y="2.5" width="13" height="11" stroke="#bdbdbd" stroke-width="1.2" fill="none"/><path d="M1.5 6 H14.5 M4.5 1 V3.5 M11.5 1 V3.5" stroke="#bdbdbd" stroke-width="1.2"/></svg>
<div class="a" style="left:1708px;top:274px;width:387px;height:35px;border:1px solid #d9d9d9;border-radius:6px;background:#fff"></div>
<div class="a" style="left:2104px;top:293px;width:14px;height:1px;background:#555"></div>
<div class="a" style="left:2127px;top:274px;width:387px;height:35px;border:1px solid #d9d9d9;border-radius:6px;background:#fff"></div>
<div class="a" style="left:292px;top:332px;width:70px;height:35px;border-radius:6px;background:#0a5cff;box-shadow:0 2px 0 rgba(5,95,255,.1);color:#fff;font-size:15px;line-height:35px;text-align:center;letter-spacing:4px;text-indent:4px;-webkit-text-stroke:0.3px #fff">筛选</div>
<div class="a" style="left:379px;top:332px;width:128px;height:35px;border:1px solid #d9d9d9;border-radius:6px;background:#f5f5f5;color:#bfbfbf;font-size:15px;line-height:33px;text-align:center">清除筛选条件</div>
<div class="a" style="left:274px;top:385px;width:2274px;height:51px;background:#fafafa;border-radius:8px 8px 0 0"></div>
<div class="a" style="left:480px;top:398px;width:1px;height:24px;background:#ececec"></div>
<div class="a" style="left:645px;top:398px;width:1px;height:24px;background:#ececec"></div>
<div class="a" style="left:810px;top:398px;width:1px;height:24px;background:#ececec"></div>
<div class="a" style="left:975px;top:398px;width:1px;height:24px;background:#ececec"></div>
<div class="a" style="left:1140px;top:398px;width:1px;height:24px;background:#ececec"></div>
<div class="a" style="left:1305px;top:398px;width:1px;height:24px;background:#ececec"></div>
<div class="a" style="left:1470px;top:398px;width:1px;height:24px;background:#ececec"></div>
<div class="a" style="left:1635px;top:398px;width:1px;height:24px;background:#ececec"></div>
<div class="a" style="left:1800px;top:398px;width:1px;height:24px;background:#ececec"></div>
<div class="a" style="left:1965px;top:398px;width:1px;height:24px;background:#ececec"></div>
<div class="a" style="left:2130px;top:398px;width:1px;height:24px;background:#ececec"></div>
<div class="a" style="left:2295px;top:398px;width:1px;height:24px;background:#ececec"></div>
<div class="a" style="left:2460px;top:398px;width:1px;height:24px;background:#ececec"></div>
<div class="a" style="left:354px;top:399px;line-height:22px;font-size:15px;font-weight:bold;color:#1f1f1f;white-space:nowrap">操作<span class=sl>/</span>状态</div>
<div class="a" style="left:490px;top:399px;line-height:22px;font-size:15px;font-weight:bold;color:#1f1f1f;white-space:nowrap">类型</div>
<svg class="a" style="left:625px;top:402px" width="10" height="16" viewBox="0 0 10 16"><path d="M5 0.5 L9.5 6 H0.5 Z M5 15.5 L9.5 10 H0.5 Z" fill="#bdbdbd"/></svg>
<div class="a" style="left:655px;top:399px;line-height:22px;font-size:15px;font-weight:bold;color:#1f1f1f;white-space:nowrap">对应记账</div>
<svg class="a" style="left:790px;top:402px" width="10" height="16" viewBox="0 0 10 16"><path d="M5 0.5 L9.5 6 H0.5 Z M5 15.5 L9.5 10 H0.5 Z" fill="#bdbdbd"/></svg>
<div class="a" style="left:820px;top:399px;line-height:22px;font-size:15px;font-weight:bold;color:#1f1f1f;white-space:nowrap">对应客户<span class=sl>/</span>供应商</div>
<svg class="a" style="left:955px;top:402px" width="10" height="16" viewBox="0 0 10 16"><path d="M5 0.5 L9.5 6 H0.5 Z M5 15.5 L9.5 10 H0.5 Z" fill="#bdbdbd"/></svg>
<div class="a" style="left:985px;top:399px;line-height:22px;font-size:15px;font-weight:bold;color:#1f1f1f;white-space:nowrap">订单<span class=sl>/</span>采购单<span class=sl>/</span>工单</div>
<svg class="a" style="left:1120px;top:402px" width="10" height="16" viewBox="0 0 10 16"><path d="M5 0.5 L9.5 6 H0.5 Z M5 15.5 L9.5 10 H0.5 Z" fill="#bdbdbd"/></svg>
<div class="a" style="left:1150px;top:399px;line-height:22px;font-size:15px;font-weight:bold;color:#1f1f1f;white-space:nowrap">款项日期</div>
<svg class="a" style="left:1285px;top:402px" width="10" height="16" viewBox="0 0 10 16"><path d="M5 0.5 L9.5 6 H0.5 Z M5 15.5 L9.5 10 H0.5 Z" fill="#bdbdbd"/></svg>
<div class="a" style="left:1315px;top:399px;line-height:22px;font-size:15px;font-weight:bold;color:#1f1f1f;white-space:nowrap">付款方式</div>
<svg class="a" style="left:1450px;top:402px" width="10" height="16" viewBox="0 0 10 16"><path d="M5 0.5 L9.5 6 H0.5 Z M5 15.5 L9.5 10 H0.5 Z" fill="#bdbdbd"/></svg>
<div class="a" style="left:1471px;width:137px;top:399px;line-height:22px;font-size:15px;font-weight:bold;color:#1f1f1f;white-space:nowrap;text-align:right">金额</div>
<svg class="a" style="left:1616px;top:402px" width="10" height="16" viewBox="0 0 10 16"><path d="M5 0.5 L9.5 6 H0.5 Z M5 15.5 L9.5 10 H0.5 Z" fill="#bdbdbd"/></svg>
<div class="a" style="left:1636px;width:137px;top:399px;line-height:22px;font-size:15px;font-weight:bold;color:#1f1f1f;white-space:nowrap;text-align:right">冲销金额</div>
<svg class="a" style="left:1781px;top:402px" width="10" height="16" viewBox="0 0 10 16"><path d="M5 0.5 L9.5 6 H0.5 Z M5 15.5 L9.5 10 H0.5 Z" fill="#bdbdbd"/></svg>
<div class="a" style="left:1810px;top:399px;line-height:22px;font-size:15px;font-weight:bold;color:#1f1f1f;white-space:nowrap">已开发票</div>
<svg class="a" style="left:1945px;top:402px" width="10" height="16" viewBox="0 0 10 16"><path d="M5 0.5 L9.5 6 H0.5 Z M5 15.5 L9.5 10 H0.5 Z" fill="#bdbdbd"/></svg>
<div class="a" style="left:1975px;top:399px;line-height:22px;font-size:15px;font-weight:bold;color:#1f1f1f;white-space:nowrap">期次</div>
<svg class="a" style="left:2110px;top:402px" width="10" height="16" viewBox="0 0 10 16"><path d="M5 0.5 L9.5 6 H0.5 Z M5 15.5 L9.5 10 H0.5 Z" fill="#bdbdbd"/></svg>
<div class="a" style="left:2140px;top:399px;line-height:22px;font-size:15px;font-weight:bold;color:#1f1f1f;white-space:nowrap">分类</div>
<svg class="a" style="left:2275px;top:402px" width="10" height="16" viewBox="0 0 10 16"><path d="M5 0.5 L9.5 6 H0.5 Z M5 15.5 L9.5 10 H0.5 Z" fill="#bdbdbd"/></svg>
<div class="a" style="left:2305px;top:399px;line-height:22px;font-size:15px;font-weight:bold;color:#1f1f1f;white-space:nowrap">所有者</div>
<svg class="a" style="left:2440px;top:402px" width="10" height="16" viewBox="0 0 10 16"><path d="M5 0.5 L9.5 6 H0.5 Z M5 15.5 L9.5 10 H0.5 Z" fill="#bdbdbd"/></svg>
<div class="a" style="left:2470px;top:399px;line-height:22px;font-size:15px;font-weight:bold;color:#1f1f1f;white-space:nowrap">审核进度</div>
<div class="a" style="left:300px;top:401px;width:18px;height:18px;border:1px solid #d9d9d9;border-radius:4px;background:#fff"><div class="a" style="left:3.5px;top:3.5px;width:9px;height:9px;background:#0a5cff"></div></div>
<div class="a" style="left:274px;top:436.0px;width:2266px;height:51.5px;background:#e6f1fd;border-bottom:1px solid #e3edf8"></div>
<svg class="a" style="left:300px;top:453.5px" width="18" height="17" viewBox="0 0 18 17"><rect x="0" y="0" width="18" height="17" rx="4" fill="#0a5cff"/><path d="M4 8.5 L7.8 12.2 L14.2 5" stroke="#fff" stroke-width="2.2" fill="none"/></svg>
<svg class="a" style="left:364.5px;top:453.2px" width="5" height="16" viewBox="0 0 5 16"><circle cx="2.5" cy="1.8" r="1.55" fill="#0a5cff"/><circle cx="2.5" cy="8.2" r="1.55" fill="#0a5cff"/><circle cx="2.5" cy="14.4" r="1.55" fill="#0a5cff"/></svg>
<svg class="a" style="left:389px;top:451.8px" width="17" height="17" viewBox="0 0 17 17"><path d="M3.3 0.7 H13.7 V8.9 H16.2 L8.5 15.3 L0.8 8.9 H3.3 Z" stroke="#3dba80" stroke-width="0.95" fill="none" stroke-linejoin="miter"/><path d="M6 3 L8.5 5.8 L11 3 M8.5 5.8 V11 M6.3 6.5 H10.7 M6.3 8.4 H10.7" stroke="#3dba80" stroke-width="0.95" fill="none"/></svg>
<div class="a" style="left:490px;top:451.1px;line-height:22px;font-size:15px;white-space:nowrap;-webkit-text-stroke:0.12px currentColor;color:#1862dc">销售回款</div>
<div class="a" style="left:820px;top:451.1px;line-height:22px;font-size:15px;white-space:nowrap;-webkit-text-stroke:0.12px currentColor;color:#1862dc">郭天鹏</div>
<div class="a" style="left:1150px;top:451.1px;line-height:22px;font-size:15px;white-space:nowrap;-webkit-text-stroke:0.12px currentColor;color:#333">2015-10-21</div>
<div class="a" style="left:1471px;width:156px;text-align:right;top:451.1px;line-height:22px;font-size:15px;white-space:nowrap;-webkit-text-stroke:0.12px currentColor;color:#4fbd32;letter-spacing:-0.2px">¥1,888.00</div>
<div class="a" style="left:1636px;width:156px;text-align:right;top:451.1px;line-height:22px;font-size:15px;white-space:nowrap;-webkit-text-stroke:0.12px currentColor;color:#333;letter-spacing:-0.2px">¥1,888.00</div>
<div class="a" style="left:1810px;top:451.1px;line-height:22px;font-size:15px;white-space:nowrap;-webkit-text-stroke:0.12px currentColor;color:#333">无需开票</div>
<div class="a" style="left:2305px;top:451.1px;line-height:22px;font-size:15px;white-space:nowrap;-webkit-text-stroke:0.12px currentColor;color:#333">abc</div>
<div class="a" style="left:274px;top:487.6px;width:2266px;height:51.5px;background:#e6f1fd;border-bottom:1px solid #efefef"></div>
<svg class="a" style="left:300px;top:505.0px" width="18" height="17" viewBox="0 0 18 17"><rect x="0" y="0" width="18" height="17" rx="4" fill="#0a5cff"/><path d="M4 8.5 L7.8 12.2 L14.2 5" stroke="#fff" stroke-width="2.2" fill="none"/></svg>
<svg class="a" style="left:364.5px;top:504.7px" width="5" height="16" viewBox="0 0 5 16"><circle cx="2.5" cy="1.8" r="1.55" fill="#0a5cff"/><circle cx="2.5" cy="8.2" r="1.55" fill="#0a5cff"/><circle cx="2.5" cy="14.4" r="1.55" fill="#0a5cff"/></svg>
<svg class="a" style="left:389px;top:503.3px" width="17" height="17" viewBox="0 0 17 17"><path d="M3.3 0.7 H13.7 V8.9 H16.2 L8.5 15.3 L0.8 8.9 H3.3 Z" stroke="#3dba80" stroke-width="0.95" fill="none" stroke-linejoin="miter"/><path d="M6 3 L8.5 5.8 L11 3 M8.5 5.8 V11 M6.3 6.5 H10.7 M6.3 8.4 H10.7" stroke="#3dba80" stroke-width="0.95" fill="none"/></svg>
<div class="a" style="left:490px;top:502.6px;line-height:22px;font-size:15px;white-space:nowrap;-webkit-text-stroke:0.12px currentColor;color:#1862dc">销售回款</div>
<div class="a" style="left:820px;top:502.6px;line-height:22px;font-size:15px;white-space:nowrap;-webkit-text-stroke:0.12px currentColor;color:#1862dc">郭天鹏</div>
<div class="a" style="left:1150px;top:502.6px;line-height:22px;font-size:15px;white-space:nowrap;-webkit-text-stroke:0.12px currentColor;color:#333">2025-10-23</div>
<div class="a" style="left:1471px;width:156px;text-align:right;top:502.6px;line-height:22px;font-size:15px;white-space:nowrap;-webkit-text-stroke:0.12px currentColor;color:#4fbd32;letter-spacing:-0.2px">¥888.00</div>
<div class="a" style="left:1636px;width:156px;text-align:right;top:502.6px;line-height:22px;font-size:15px;white-space:nowrap;-webkit-text-stroke:0.12px currentColor;color:#333;letter-spacing:-0.2px">¥888.00</div>
<div class="a" style="left:1810px;top:502.6px;line-height:22px;font-size:15px;white-space:nowrap;-webkit-text-stroke:0.12px currentColor;color:#333">无需开票</div>
<div class="a" style="left:2305px;top:502.6px;line-height:22px;font-size:15px;white-space:nowrap;-webkit-text-stroke:0.12px currentColor;color:#333">abc</div>
<div class="a" style="left:274px;top:539.1px;width:2266px;height:51.5px;background:#fff;border-bottom:1px solid #efefef"></div>
<div class="a" style="left:300px;top:556.6px;width:18px;height:17px;border:1px solid #d9d9d9;border-radius:4px;background:#fff"></div>
<svg class="a" style="left:364.5px;top:556.3px" width="5" height="16" viewBox="0 0 5 16"><circle cx="2.5" cy="1.8" r="1.55" fill="#0a5cff"/><circle cx="2.5" cy="8.2" r="1.55" fill="#0a5cff"/><circle cx="2.5" cy="14.4" r="1.55" fill="#0a5cff"/></svg>
<svg class="a" style="left:389px;top:554.9px" width="17" height="17" viewBox="0 0 17 17"><path d="M3.3 0.7 H13.7 V8.9 H16.2 L8.5 15.3 L0.8 8.9 H3.3 Z" stroke="#3dba80" stroke-width="0.95" fill="none" stroke-linejoin="miter"/><path d="M6 3 L8.5 5.8 L11 3 M8.5 5.8 V11 M6.3 6.5 H10.7 M6.3 8.4 H10.7" stroke="#3dba80" stroke-width="0.95" fill="none"/></svg>
<div class="a" style="left:490px;top:554.2px;line-height:22px;font-size:15px;white-space:nowrap;-webkit-text-stroke:0.12px currentColor;color:#1862dc">销售回款</div>
<div class="a" style="left:820px;top:554.2px;line-height:22px;font-size:15px;white-space:nowrap;-webkit-text-stroke:0.12px currentColor;color:#1862dc">郭天鹏</div>
<div class="a" style="left:1150px;top:554.2px;line-height:22px;font-size:15px;white-space:nowrap;-webkit-text-stroke:0.12px currentColor;color:#333">2025-10-11</div>
<div class="a" style="left:1471px;width:156px;text-align:right;top:554.2px;line-height:22px;font-size:15px;white-space:nowrap;-webkit-text-stroke:0.12px currentColor;color:#4fbd32;letter-spacing:-0.2px">¥21,110.90</div>
<div class="a" style="left:1636px;width:156px;text-align:right;top:554.2px;line-height:22px;font-size:15px;white-space:nowrap;-webkit-text-stroke:0.12px currentColor;color:#333;letter-spacing:-0.2px">¥21,110.90</div>
<div class="a" style="left:1810px;top:554.2px;line-height:22px;font-size:15px;white-space:nowrap;-webkit-text-stroke:0.12px currentColor;color:#333">无需开票</div>
<div class="a" style="left:2305px;top:554.2px;line-height:22px;font-size:15px;white-space:nowrap;-webkit-text-stroke:0.12px currentColor;color:#333">郭天鹏</div>
<div class="a" style="left:274px;top:590.6px;width:2266px;height:51.5px;background:#fff;border-bottom:1px solid #efefef"></div>
<div class="a" style="left:300px;top:608.1px;width:18px;height:17px;border:1px solid #d9d9d9;border-radius:4px;background:#fff"></div>
<svg class="a" style="left:364.5px;top:607.8px" width="5" height="16" viewBox="0 0 5 16"><circle cx="2.5" cy="1.8" r="1.55" fill="#0a5cff"/><circle cx="2.5" cy="8.2" r="1.55" fill="#0a5cff"/><circle cx="2.5" cy="14.4" r="1.55" fill="#0a5cff"/></svg>
<svg class="a" style="left:389px;top:606.4px" width="17" height="17" viewBox="0 0 17 17"><path d="M3.3 0.7 H13.7 V8.9 H16.2 L8.5 15.3 L0.8 8.9 H3.3 Z" stroke="#3dba80" stroke-width="0.95" fill="none" stroke-linejoin="miter"/><path d="M6 3 L8.5 5.8 L11 3 M8.5 5.8 V11 M6.3 6.5 H10.7 M6.3 8.4 H10.7" stroke="#3dba80" stroke-width="0.95" fill="none"/></svg>
<div class="a" style="left:490px;top:605.7px;line-height:22px;font-size:15px;white-space:nowrap;-webkit-text-stroke:0.12px currentColor;color:#1862dc">销售回款</div>
<div class="a" style="left:820px;top:605.7px;line-height:22px;font-size:15px;white-space:nowrap;-webkit-text-stroke:0.12px currentColor;color:#1862dc">郭天鹏</div>
<div class="a" style="left:1150px;top:605.7px;line-height:22px;font-size:15px;white-space:nowrap;-webkit-text-stroke:0.12px currentColor;color:#333">2025-09-23</div>
<div class="a" style="left:1315px;top:605.7px;line-height:22px;font-size:15px;white-space:nowrap;-webkit-text-stroke:0.12px currentColor;color:#333">现金</div>
<div class="a" style="left:1471px;width:156px;text-align:right;top:605.7px;line-height:22px;font-size:15px;white-space:nowrap;-webkit-text-stroke:0.12px currentColor;color:#4fbd32;letter-spacing:-0.2px">¥9,999,999.00</div>
<div class="a" style="left:1636px;width:156px;text-align:right;top:605.7px;line-height:22px;font-size:15px;white-space:nowrap;-webkit-text-stroke:0.12px currentColor;color:#333;letter-spacing:-0.2px">¥9,999,999.00</div>
<div class="a" style="left:1810px;top:605.7px;line-height:22px;font-size:15px;white-space:nowrap;-webkit-text-stroke:0.12px currentColor;color:#333">无需开票</div>
<div class="a" style="left:2305px;top:605.7px;line-height:22px;font-size:15px;white-space:nowrap;-webkit-text-stroke:0.12px currentColor;color:#333">郭天鹏</div>
<div class="a" style="left:274px;top:642.2px;width:2266px;height:51.5px;background:#fff;border-bottom:1px solid #efefef"></div>
<div class="a" style="left:300px;top:659.7px;width:18px;height:17px;border:1px solid #d9d9d9;border-radius:4px;background:#fff"></div>
<svg class="a" style="left:364.5px;top:659.4px" width="5" height="16" viewBox="0 0 5 16"><circle cx="2.5" cy="1.8" r="1.55" fill="#0a5cff"/><circle cx="2.5" cy="8.2" r="1.55" fill="#0a5cff"/><circle cx="2.5" cy="14.4" r="1.55" fill="#0a5cff"/></svg>
<svg class="a" style="left:389px;top:658.0px" width="17" height="17" viewBox="0 0 17 17"><path d="M3.3 0.7 H13.7 V8.9 H16.2 L8.5 15.3 L0.8 8.9 H3.3 Z" stroke="#3dba80" stroke-width="0.95" fill="none" stroke-linejoin="miter"/><path d="M6 3 L8.5 5.8 L11 3 M8.5 5.8 V11 M6.3 6.5 H10.7 M6.3 8.4 H10.7" stroke="#3dba80" stroke-width="0.95" fill="none"/></svg>
<div class="a" style="left:490px;top:657.3px;line-height:22px;font-size:15px;white-space:nowrap;-webkit-text-stroke:0.12px currentColor;color:#1862dc">销售回款</div>
<div class="a" style="left:820px;top:657.3px;line-height:22px;font-size:15px;white-space:nowrap;-webkit-text-stroke:0.12px currentColor;color:#1862dc">郭天鹏</div>
<div class="a" style="left:1150px;top:657.3px;line-height:22px;font-size:15px;white-space:nowrap;-webkit-text-stroke:0.12px currentColor;color:#333">2025-09-23</div>
<div class="a" style="left:1315px;top:657.3px;line-height:22px;font-size:15px;white-space:nowrap;-webkit-text-stroke:0.12px currentColor;color:#333">现金</div>
<div class="a" style="left:1471px;width:156px;text-align:right;top:657.3px;line-height:22px;font-size:15px;white-space:nowrap;-webkit-text-stroke:0.12px currentColor;color:#4fbd32;letter-spacing:-0.2px">¥9,999,999.00</div>
<div class="a" style="left:1636px;width:156px;text-align:right;top:657.3px;line-height:22px;font-size:15px;white-space:nowrap;-webkit-text-stroke:0.12px currentColor;color:#333;letter-spacing:-0.2px">¥9,999,999.00</div>
<div class="a" style="left:1810px;top:657.3px;line-height:22px;font-size:15px;white-space:nowrap;-webkit-text-stroke:0.12px currentColor;color:#333">无需开票</div>
<div class="a" style="left:2305px;top:657.3px;line-height:22px;font-size:15px;white-space:nowrap;-webkit-text-stroke:0.12px currentColor;color:#333">郭天鹏</div>
<div class="a" style="left:274px;top:693.8px;width:2266px;height:51.5px;background:#fff;border-bottom:1px solid #efefef"></div>
<div class="a" style="left:300px;top:711.2px;width:18px;height:17px;border:1px solid #d9d9d9;border-radius:4px;background:#fff"></div>
<svg class="a" style="left:364.5px;top:710.9px" width="5" height="16" viewBox="0 0 5 16"><circle cx="2.5" cy="1.8" r="1.55" fill="#0a5cff"/><circle cx="2.5" cy="8.2" r="1.55" fill="#0a5cff"/><circle cx="2.5" cy="14.4" r="1.55" fill="#0a5cff"/></svg>
<svg class="a" style="left:389px;top:709.5px" width="17" height="17" viewBox="0 0 17 17"><path d="M3.3 0.7 H13.7 V8.9 H16.2 L8.5 15.3 L0.8 8.9 H3.3 Z" stroke="#3dba80" stroke-width="0.95" fill="none" stroke-linejoin="miter"/><path d="M6 3 L8.5 5.8 L11 3 M8.5 5.8 V11 M6.3 6.5 H10.7 M6.3 8.4 H10.7" stroke="#3dba80" stroke-width="0.95" fill="none"/></svg>
<div class="a" style="left:490px;top:708.8px;line-height:22px;font-size:15px;white-space:nowrap;-webkit-text-stroke:0.12px currentColor;color:#1862dc">销售回款</div>
<div class="a" style="left:820px;top:708.8px;line-height:22px;font-size:15px;white-space:nowrap;-webkit-text-stroke:0.12px currentColor;color:#1862dc">法修散打</div>
<div class="a" style="left:1150px;top:708.8px;line-height:22px;font-size:15px;white-space:nowrap;-webkit-text-stroke:0.12px currentColor;color:#333">2025-09-24</div>
<div class="a" style="left:1471px;width:156px;text-align:right;top:708.8px;line-height:22px;font-size:15px;white-space:nowrap;-webkit-text-stroke:0.12px currentColor;color:#4fbd32;letter-spacing:-0.2px">¥98,765.00</div>
<div class="a" style="left:1636px;width:156px;text-align:right;top:708.8px;line-height:22px;font-size:15px;white-space:nowrap;-webkit-text-stroke:0.12px currentColor;color:#333;letter-spacing:-0.2px">¥98,765.00</div>
<div class="a" style="left:1810px;top:708.8px;line-height:22px;font-size:15px;white-space:nowrap;-webkit-text-stroke:0.12px currentColor;color:#333">无需开票</div>
<div class="a" style="left:2305px;top:708.8px;line-height:22px;font-size:15px;white-space:nowrap;-webkit-text-stroke:0.12px currentColor;color:#333">杨鸣</div>
<div class="a" style="left:274px;top:745.3px;width:2266px;height:51.5px;background:#fff;border-bottom:1px solid #efefef"></div>
<div class="a" style="left:300px;top:762.8px;width:18px;height:17px;border:1px solid #d9d9d9;border-radius:4px;background:#fff"></div>
<svg class="a" style="left:364.5px;top:762.5px" width="5" height="16" viewBox="0 0 5 16"><circle cx="2.5" cy="1.8" r="1.55" fill="#0a5cff"/><circle cx="2.5" cy="8.2" r="1.55" fill="#0a5cff"/><circle cx="2.5" cy="14.4" r="1.55" fill="#0a5cff"/></svg>
<svg class="a" style="left:389px;top:761.1px" width="17" height="17" viewBox="0 0 17 17"><path d="M3.3 0.7 H13.7 V8.9 H16.2 L8.5 15.3 L0.8 8.9 H3.3 Z" stroke="#3dba80" stroke-width="0.95" fill="none" stroke-linejoin="miter"/><path d="M6 3 L8.5 5.8 L11 3 M8.5 5.8 V11 M6.3 6.5 H10.7 M6.3 8.4 H10.7" stroke="#3dba80" stroke-width="0.95" fill="none"/></svg>
<div class="a" style="left:490px;top:760.4px;line-height:22px;font-size:15px;white-space:nowrap;-webkit-text-stroke:0.12px currentColor;color:#1862dc">销售回款</div>
<div class="a" style="left:820px;top:760.4px;line-height:22px;font-size:15px;white-space:nowrap;-webkit-text-stroke:0.12px currentColor;color:#1862dc">郭天鹏</div>
<div class="a" style="left:1150px;top:760.4px;line-height:22px;font-size:15px;white-space:nowrap;-webkit-text-stroke:0.12px currentColor;color:#333">2025-09-23</div>
<div class="a" style="left:1471px;width:156px;text-align:right;top:760.4px;line-height:22px;font-size:15px;white-space:nowrap;-webkit-text-stroke:0.12px currentColor;color:#4fbd32;letter-spacing:-0.2px">¥10,555.45</div>
<div class="a" style="left:1636px;width:156px;text-align:right;top:760.4px;line-height:22px;font-size:15px;white-space:nowrap;-webkit-text-stroke:0.12px currentColor;color:#333;letter-spacing:-0.2px">¥10,555.45</div>
<div class="a" style="left:1810px;top:760.4px;line-height:22px;font-size:15px;white-space:nowrap;-webkit-text-stroke:0.12px currentColor;color:#333">无需开票</div>
<div class="a" style="left:2305px;top:760.4px;line-height:22px;font-size:15px;white-space:nowrap;-webkit-text-stroke:0.12px currentColor;color:#333">杨鸣</div>
<div class="a" style="left:274px;top:796.8px;width:2266px;height:51.5px;background:#fff;border-bottom:1px solid #efefef"></div>
<div class="a" style="left:300px;top:814.3px;width:18px;height:17px;border:1px solid #d9d9d9;border-radius:4px;background:#fff"></div>
<svg class="a" style="left:364.5px;top:814.0px" width="5" height="16" viewBox="0 0 5 16"><circle cx="2.5" cy="1.8" r="1.55" fill="#0a5cff"/><circle cx="2.5" cy="8.2" r="1.55" fill="#0a5cff"/><circle cx="2.5" cy="14.4" r="1.55" fill="#0a5cff"/></svg>
<svg class="a" style="left:389px;top:812.6px" width="17" height="17" viewBox="0 0 17 17"><path d="M3.3 0.7 H13.7 V8.9 H16.2 L8.5 15.3 L0.8 8.9 H3.3 Z" stroke="#3dba80" stroke-width="0.95" fill="none" stroke-linejoin="miter"/><path d="M6 3 L8.5 5.8 L11 3 M8.5 5.8 V11 M6.3 6.5 H10.7 M6.3 8.4 H10.7" stroke="#3dba80" stroke-width="0.95" fill="none"/></svg>
<div class="a" style="left:490px;top:811.9px;line-height:22px;font-size:15px;white-space:nowrap;-webkit-text-stroke:0.12px currentColor;color:#1862dc">销售回款</div>
<div class="a" style="left:820px;top:811.9px;line-height:22px;font-size:15px;white-space:nowrap;-webkit-text-stroke:0.12px currentColor;color:#1862dc">郭天鹏</div>
<div class="a" style="left:1150px;top:811.9px;line-height:22px;font-size:15px;white-space:nowrap;-webkit-text-stroke:0.12px currentColor;color:#333">2025-09-23</div>
<div class="a" style="left:1315px;top:811.9px;line-height:22px;font-size:15px;white-space:nowrap;-webkit-text-stroke:0.12px currentColor;color:#333">现金</div>
<div class="a" style="left:1471px;width:156px;text-align:right;top:811.9px;line-height:22px;font-size:15px;white-space:nowrap;-webkit-text-stroke:0.12px currentColor;color:#4fbd32;letter-spacing:-0.2px">¥9,999,999.00</div>
<div class="a" style="left:1636px;width:156px;text-align:right;top:811.9px;line-height:22px;font-size:15px;white-space:nowrap;-webkit-text-stroke:0.12px currentColor;color:#333;letter-spacing:-0.2px">¥9,999,999.00</div>
<div class="a" style="left:1810px;top:811.9px;line-height:22px;font-size:15px;white-space:nowrap;-webkit-text-stroke:0.12px currentColor;color:#333">无需开票</div>
<div class="a" style="left:2305px;top:811.9px;line-height:22px;font-size:15px;white-space:nowrap;-webkit-text-stroke:0.12px currentColor;color:#333">郭天鹏</div>
<div class="a" style="left:274px;top:848.4px;width:2266px;height:51.5px;background:#fff;border-bottom:1px solid #efefef"></div>
<div class="a" style="left:300px;top:865.9px;width:18px;height:17px;border:1px solid #d9d9d9;border-radius:4px;background:#fff"></div>
<svg class="a" style="left:364.5px;top:865.6px" width="5" height="16" viewBox="0 0 5 16"><circle cx="2.5" cy="1.8" r="1.55" fill="#0a5cff"/><circle cx="2.5" cy="8.2" r="1.55" fill="#0a5cff"/><circle cx="2.5" cy="14.4" r="1.55" fill="#0a5cff"/></svg>
<svg class="a" style="left:389px;top:864.2px" width="17" height="17" viewBox="0 0 17 17"><path d="M3.3 0.7 H13.7 V8.9 H16.2 L8.5 15.3 L0.8 8.9 H3.3 Z" stroke="#3dba80" stroke-width="0.95" fill="none" stroke-linejoin="miter"/><path d="M6 3 L8.5 5.8 L11 3 M8.5 5.8 V11 M6.3 6.5 H10.7 M6.3 8.4 H10.7" stroke="#3dba80" stroke-width="0.95" fill="none"/></svg>
<div class="a" style="left:490px;top:863.5px;line-height:22px;font-size:15px;white-space:nowrap;-webkit-text-stroke:0.12px currentColor;color:#1862dc">销售回款</div>
<div class="a" style="left:820px;top:863.5px;line-height:22px;font-size:15px;white-space:nowrap;-webkit-text-stroke:0.12px currentColor;color:#1862dc">郭天鹏</div>
<div class="a" style="left:1150px;top:863.5px;line-height:22px;font-size:15px;white-space:nowrap;-webkit-text-stroke:0.12px currentColor;color:#333">2015-10-21</div>
<div class="a" style="left:1471px;width:156px;text-align:right;top:863.5px;line-height:22px;font-size:15px;white-space:nowrap;-webkit-text-stroke:0.12px currentColor;color:#4fbd32;letter-spacing:-0.2px">¥1,888.00</div>
<div class="a" style="left:1636px;width:156px;text-align:right;top:863.5px;line-height:22px;font-size:15px;white-space:nowrap;-webkit-text-stroke:0.12px currentColor;color:#333;letter-spacing:-0.2px">¥1,888.00</div>
<div class="a" style="left:1810px;top:863.5px;line-height:22px;font-size:15px;white-space:nowrap;-webkit-text-stroke:0.12px currentColor;color:#333">无需开票</div>
<div class="a" style="left:2305px;top:863.5px;line-height:22px;font-size:15px;white-space:nowrap;-webkit-text-stroke:0.12px currentColor;color:#333">abc</div>
<div class="a" style="left:274px;top:900.0px;width:2266px;height:51.5px;background:#fff;border-bottom:1px solid #efefef"></div>
<div class="a" style="left:300px;top:917.4px;width:18px;height:17px;border:1px solid #d9d9d9;border-radius:4px;background:#fff"></div>
<svg class="a" style="left:364.5px;top:917.1px" width="5" height="16" viewBox="0 0 5 16"><circle cx="2.5" cy="1.8" r="1.55" fill="#0a5cff"/><circle cx="2.5" cy="8.2" r="1.55" fill="#0a5cff"/><circle cx="2.5" cy="14.4" r="1.55" fill="#0a5cff"/></svg>
<svg class="a" style="left:389px;top:915.7px" width="17" height="17" viewBox="0 0 17 17"><path d="M3.3 0.7 H13.7 V8.9 H16.2 L8.5 15.3 L0.8 8.9 H3.3 Z" stroke="#3dba80" stroke-width="0.95" fill="none" stroke-linejoin="miter"/><path d="M6 3 L8.5 5.8 L11 3 M8.5 5.8 V11 M6.3 6.5 H10.7 M6.3 8.4 H10.7" stroke="#3dba80" stroke-width="0.95" fill="none"/></svg>
<div class="a" style="left:490px;top:915.0px;line-height:22px;font-size:15px;white-space:nowrap;-webkit-text-stroke:0.12px currentColor;color:#1862dc">销售回款</div>
<div class="a" style="left:820px;top:915.0px;line-height:22px;font-size:15px;white-space:nowrap;-webkit-text-stroke:0.12px currentColor;color:#1862dc">郭天鹏</div>
<div class="a" style="left:1150px;top:915.0px;line-height:22px;font-size:15px;white-space:nowrap;-webkit-text-stroke:0.12px currentColor;color:#333">2025-10-23</div>
<div class="a" style="left:1471px;width:156px;text-align:right;top:915.0px;line-height:22px;font-size:15px;white-space:nowrap;-webkit-text-stroke:0.12px currentColor;color:#4fbd32;letter-spacing:-0.2px">¥888.00</div>
<div class="a" style="left:1636px;width:156px;text-align:right;top:915.0px;line-height:22px;font-size:15px;white-space:nowrap;-webkit-text-stroke:0.12px currentColor;color:#333;letter-spacing:-0.2px">¥888.00</div>
<div class="a" style="left:1810px;top:915.0px;line-height:22px;font-size:15px;white-space:nowrap;-webkit-text-stroke:0.12px currentColor;color:#333">无需开票</div>
<div class="a" style="left:2305px;top:915.0px;line-height:22px;font-size:15px;white-space:nowrap;-webkit-text-stroke:0.12px currentColor;color:#333">abc</div>
<div class="a" style="left:2540px;top:436px;width:8px;height:611px;background:#fff"></div>
<div class="a" style="left:2520px;top:385px;width:28px;height:51px;background:linear-gradient(to right,rgba(0,0,0,0),rgba(0,0,0,0.03));border-radius:0 8px 0 0"></div>
<div class="a" style="left:2540px;top:436px;width:8px;height:827px;background:linear-gradient(to right,rgba(0,0,0,0.005),rgba(0,0,0,0.03));border-radius:0 0 8px 0"></div>
<div class="a" style="left:274px;top:1047px;width:2274px;height:1px;background:#ececec"></div>
<div class="a" style="left:411px;top:1062px;line-height:22px;font-size:15px;white-space:nowrap;-webkit-text-stroke:0.12px currentColor;color:#262626">选中合计</div>
<div class="a" style="left:1471px;width:156px;text-align:right;top:1062px;line-height:22px;font-size:15px;white-space:nowrap;-webkit-text-stroke:0.12px currentColor;color:#3a3a3a;letter-spacing:-0.25px">¥2,776.00</div>
<div class="a" style="left:1636px;width:156px;text-align:right;top:1062px;line-height:22px;font-size:15px;white-space:nowrap;-webkit-text-stroke:0.12px currentColor;color:#3a3a3a;letter-spacing:-0.25px">¥2,776.00</div>
<div class="a" style="left:274px;top:1098.5px;width:2274px;height:1px;background:#ececec"></div>
<div class="a" style="left:411px;top:1113.5px;line-height:22px;font-size:15px;white-space:nowrap;-webkit-text-stroke:0.12px currentColor;color:#262626">本页合计</div>
<div class="a" style="left:1471px;width:156px;text-align:right;top:1113.5px;line-height:22px;font-size:15px;white-space:nowrap;-webkit-text-stroke:0.12px currentColor;color:#3a3a3a;letter-spacing:-0.25px">¥30,135,980.35</div>
<div class="a" style="left:1636px;width:156px;text-align:right;top:1113.5px;line-height:22px;font-size:15px;white-space:nowrap;-webkit-text-stroke:0.12px currentColor;color:#3a3a3a;letter-spacing:-0.25px">¥30,135,980.35</div>
<div class="a" style="left:274px;top:1150px;width:2274px;height:1px;background:#ececec"></div>
<div class="a" style="left:411px;top:1165px;line-height:22px;font-size:15px;white-space:nowrap;-webkit-text-stroke:0.12px currentColor;color:#262626">全部合计</div>
<div class="a" style="left:1471px;width:156px;text-align:right;top:1165px;line-height:22px;font-size:15px;white-space:nowrap;-webkit-text-stroke:0.12px currentColor;color:#3a3a3a;letter-spacing:-0.25px">¥70,293,127.35</div>
<div class="a" style="left:1636px;width:156px;text-align:right;top:1165px;line-height:22px;font-size:15px;white-space:nowrap;-webkit-text-stroke:0.12px currentColor;color:#3a3a3a;letter-spacing:-0.25px">¥70,293,127.35</div>
<div class="a" style="left:274px;top:1201px;width:2274px;height:2px;background:#e8e8e8"></div>
<div class="a" style="left:310px;top:1224px;line-height:22px;font-size:15px;white-space:nowrap;-webkit-text-stroke:0.12px currentColor;color:#595959">已选2条</div>
<div class="a" style="left:388px;top:1216px;width:97px;height:35px;border:1px solid #d9d9d9;border-radius:6px;background:#fff;color:#262626;font-size:15px;line-height:33px;text-align:center">选中导出</div>
<svg class="a" style="left:2199px;top:1222px" width="11" height="14" viewBox="0 0 11 14"><path d="M9 1 L2.5 7 L9 13" stroke="#bbb" stroke-width="1.3" fill="none"/></svg>
<div class="a" style="left:2231px;top:1216px;width:70px;height:26px;border:1px solid #d9d9d9;border-radius:6px;background:#fff;color:#262626;font-size:15px;line-height:24px;text-align:center">1</div>
<div class="a" style="left:2313px;top:1218px;line-height:22px;font-size:15px;white-space:nowrap;-webkit-text-stroke:0.12px currentColor;color:#333">/</div>
<div class="a" style="left:2333px;top:1218px;line-height:22px;font-size:15px;white-space:nowrap;-webkit-text-stroke:0.12px currentColor;color:#333;font-size:14px">3</div>
<svg class="a" style="left:2362px;top:1222px" width="11" height="14" viewBox="0 0 11 14"><path d="M2 1 L8.5 7 L2 13" stroke="#333" stroke-width="1.4" fill="none"/></svg>
<div class="a" style="left:2412px;top:1223px;line-height:22px;font-size:15px;white-space:nowrap;-webkit-text-stroke:0.12px currentColor;color:#262626">跳至</div>
<div class="a" style="left:2451px;top:1218px;width:55px;height:35px;border:1px solid #d9d9d9;border-radius:6px;background:#fff"></div>
<div class="a" style="left:2515px;top:1223px;line-height:22px;font-size:15px;white-space:nowrap;-webkit-text-stroke:0.12px currentColor;color:#262626">页</div>
<div class="a" style="left:2533px;top:1178px;width:44px;height:44px;border-radius:22px;background:#8db3f7"></div>
<div class="a" style="left:2546px;top:1189px;width:22px;height:22px;border-radius:11px;background:#fff;color:#8db3f7;font-size:16px;line-height:22px;text-align:center;font-weight:bold">?</div>
</body></html>
